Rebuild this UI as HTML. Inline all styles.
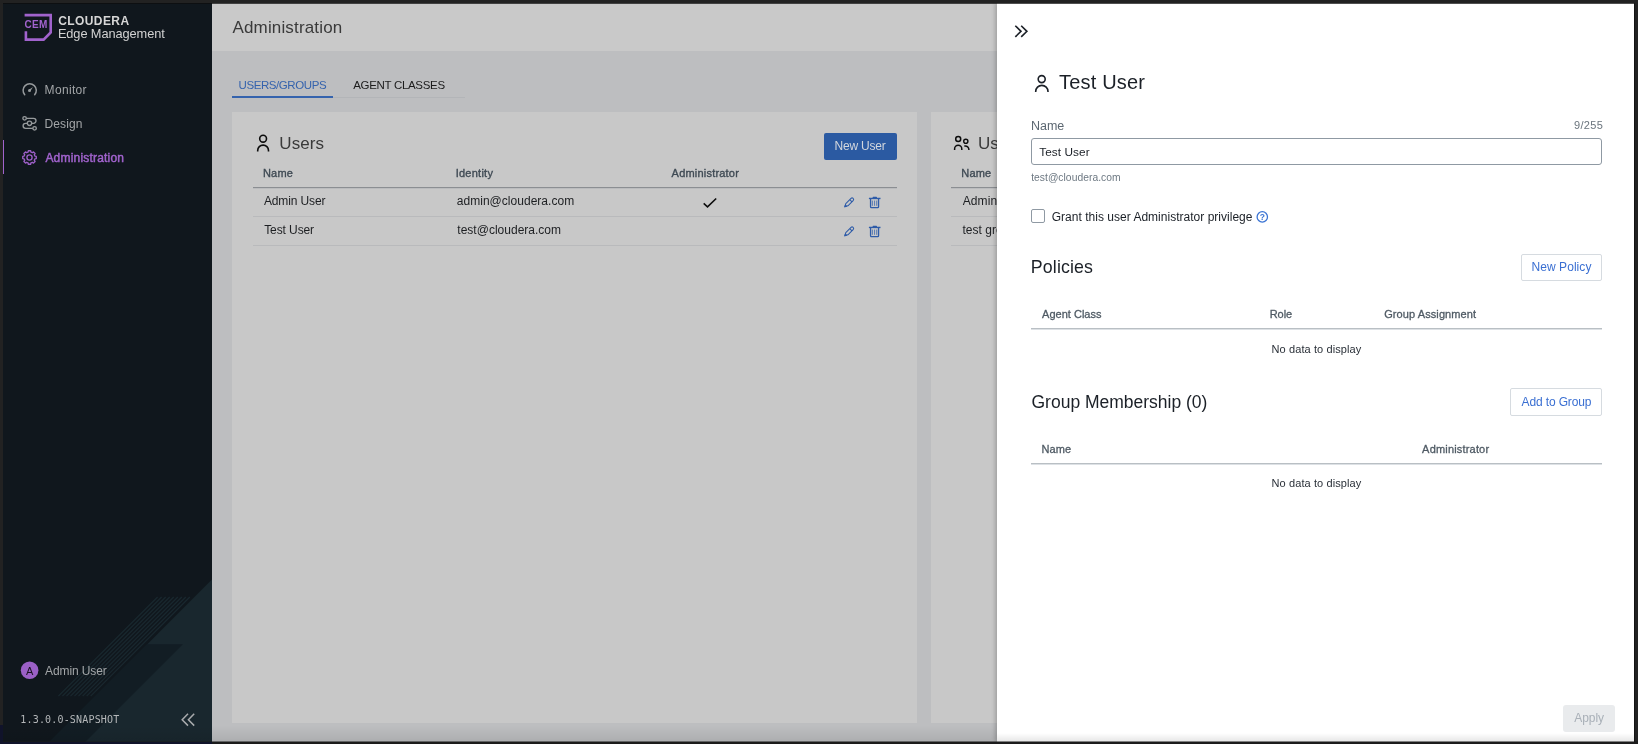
<!DOCTYPE html>
<html lang="en">
<head>
<meta charset="utf-8">
<title>Cloudera Edge Management - Administration</title>
<style>
html,body{margin:0;padding:0;}
body{width:1638px;height:744px;overflow:hidden;background:#222222;position:relative;font-family:"Liberation Sans",sans-serif;}
.abs{position:absolute;}
.t{position:absolute;white-space:nowrap;line-height:normal;}
#app{position:absolute;left:3px;top:3px;width:1631px;height:739px;overflow:hidden;background:#bdbec0;}
#root{position:absolute;left:-3px;top:-3px;width:1638px;height:744px;will-change:transform;}
#sidebar{position:absolute;left:3px;top:3px;width:209px;height:739px;background:#10171d;overflow:hidden;}
#header{position:absolute;left:212px;top:3px;width:786px;height:48px;background:#c9c9c9;}
.card{position:absolute;background:#c8c8c8;}
.hl{position:absolute;height:1px;}
#panel{position:absolute;left:997px;top:3px;width:637px;height:739px;background:#ffffff;box-shadow:-2px 0 4px rgba(0,0,0,0.20);}
.btn{position:absolute;box-sizing:border-box;border-radius:2px;}
</style>
</head>
<body>
<div id="app"><div id="root">

<!-- main content (dimmed by modal backdrop) -->
<div id="header"></div>
<div class="hl" style="left:232px;top:97px;width:233px;background:#b3b5b8;"></div>
<div class="abs" style="left:232px;top:96px;width:101px;height:2px;background:#3563ad;"></div>

<div class="card" id="card1" style="left:232px;top:112px;width:685px;height:611px;"></div>
<div class="card" id="card2" style="left:931px;top:112px;width:80px;height:611px;"></div>

<!-- users table lines -->
<div class="hl" style="left:253px;top:187px;width:644px;background:#8b8e92;"></div>
<div class="hl" style="left:253px;top:188px;width:644px;background:#bbbcbe;"></div>
<div class="hl" style="left:253px;top:216px;width:644px;background:#b9babc;"></div>
<div class="hl" style="left:253px;top:245px;width:644px;background:#b9babc;"></div>
<div class="hl" style="left:951px;top:187px;width:60px;background:#8b8e92;"></div>
<div class="hl" style="left:951px;top:188px;width:60px;background:#bbbcbe;"></div>
<div class="hl" style="left:951px;top:216px;width:60px;background:#b9babc;"></div>
<div class="hl" style="left:951px;top:245px;width:60px;background:#b9babc;"></div>

<div class="btn" style="left:824px;top:133px;width:73px;height:27px;background:#2b5aa2;"></div>

<svg class="abs" style="left:0;top:0;overflow:visible" width="997" height="744" viewBox="0 0 997 744" fill="none">
<g stroke="#0d0d0d" stroke-width="1.6">
<circle cx="263.1" cy="138.7" r="3.4"/>
<path d="M257.7,151.5 V150.5 a5.4,5.4 0 0 1 10.8,0 V151.5"/>
<circle cx="958.2" cy="139.1" r="2.5" stroke-width="1.5"/>
<path d="M954.6,150 V148.9 a3.6,3.6 0 0 1 7.2,0 V150" stroke-width="1.5"/>
<circle cx="965.8" cy="141.3" r="2.1" stroke-width="1.4"/>
<path d="M964.3,145.9 h0.9 a3.7,3.9 0 0 1 3.7,3.9 v0.2" stroke-width="1.5"/>
</g>
<path d="M703.7,203.4 L707.5,206.8 L716.2,198.5" stroke="#0d0d0d" stroke-width="1.6"/>
<g transform="translate(844.8,206.8) rotate(-45)" stroke="#2f5ca8" stroke-width="1.05" stroke-linejoin="round"><path d="M0,0 L2.9,-1.5 L10.3,-1.5 A1.5,1.5 0 0 1 10.3,1.5 L2.9,1.5 Z M8.6,-1.5 L8.6,1.5"/><path d="M0,0 L1.6,-0.8 L1.6,0.8 Z" fill="#2f5ca8"/></g>
<g stroke="#2f5ca8">
<path d="M868.9,198.45 H880.5" stroke-width="1.4"/>
<rect x="872.6" y="196.7" width="4.4" height="1.4" rx="0.6" fill="#2f5ca8" stroke="none"/>
<path d="M870.55,199.0 V206.8 a0.9,0.9 0 0 0 0.9,0.9 H877.65 a0.9,0.9 0 0 0 0.9,-0.9 V199.0" stroke-width="1.3"/>
<path d="M872.4,200.6 V205.8 M874.55,200.6 V205.8 M876.7,200.6 V205.8" stroke-width="0.8" stroke="#3d68ae"/>
</g>
<g transform="translate(844.8,235.8) rotate(-45)" stroke="#2f5ca8" stroke-width="1.05" stroke-linejoin="round"><path d="M0,0 L2.9,-1.5 L10.3,-1.5 A1.5,1.5 0 0 1 10.3,1.5 L2.9,1.5 Z M8.6,-1.5 L8.6,1.5"/><path d="M0,0 L1.6,-0.8 L1.6,0.8 Z" fill="#2f5ca8"/></g>
<g stroke="#2f5ca8">
<path d="M868.9,227.45 H880.5" stroke-width="1.4"/>
<rect x="872.6" y="225.7" width="4.4" height="1.4" rx="0.6" fill="#2f5ca8" stroke="none"/>
<path d="M870.55,228.0 V235.8 a0.9,0.9 0 0 0 0.9,0.9 H877.65 a0.9,0.9 0 0 0 0.9,-0.9 V228.0" stroke-width="1.3"/>
<path d="M872.4,229.6 V234.8 M874.55,229.6 V234.8 M876.7,229.6 V234.8" stroke-width="0.8" stroke="#3d68ae"/>
</g>
</svg>

<!-- sidebar -->
<div id="sidebar">
<svg class="abs" style="left:0;top:0" width="209" height="739" viewBox="3 3 209 739">
  <polygon points="212,579.6 212,742 49.6,742" fill="#19272e"/>
  <polygon points="146.8,644.3 182.9,644.3 85.2,742 49.1,742" fill="#121d24"/>
  <g stroke="#19282f" stroke-width="1.2" fill="none">
  <line x1="157.6" y1="597.0" x2="58.4" y2="696.2"/>
  <line x1="161.6" y1="597.0" x2="62.4" y2="696.2"/>
  <line x1="165.7" y1="597.0" x2="66.5" y2="696.2"/>
  <line x1="169.7" y1="597.0" x2="70.5" y2="696.2"/>
  <line x1="173.7" y1="597.0" x2="74.5" y2="696.2"/>
  <line x1="177.8" y1="597.0" x2="78.5" y2="696.2"/>
  <line x1="181.8" y1="597.0" x2="82.6" y2="696.2"/>
  <line x1="185.8" y1="597.0" x2="86.6" y2="696.2"/>
  <line x1="189.8" y1="597.0" x2="90.6" y2="696.2"/>
  </g>
</svg>
<div class="abs" style="left:0;top:137px;width:1px;height:34px;background:#a163cd;"></div>
</div>

<svg class="abs" style="left:0;top:0;overflow:visible" width="212" height="744" viewBox="0 0 212 744" fill="none">
<path d="M24.6,15.1 H50.7 V32.4 L43.6,39.6 H25.9 V31.3" stroke="#a163cd" stroke-width="2.6" stroke-linejoin="miter"/>
<path d="M24.72,94.73 A6.6,6.6 0 1 1 34.68,94.73" stroke="#969a9c" stroke-width="1.5" stroke-linecap="round"/>
<circle cx="29.5" cy="90.5" r="1.5" fill="#969a9c"/>
<path d="M28.9,89.7 L33.0,87.1 L30.3,91.2 Z" fill="#969a9c"/>
<g stroke="#969a9c" stroke-width="1.35">
<circle cx="24.6" cy="118.3" r="1.75"/>
<circle cx="29.5" cy="123.3" r="2.15"/>
<circle cx="34.6" cy="128.3" r="1.75"/>
<path d="M26.4,118.3 H33.5 A2.5,2.5 0 0 1 33.5,123.3 H31.7"/>
<path d="M27.3,123.3 H25.6 A2.5,2.5 0 0 0 25.6,128.3 H32.8"/>
</g>
<path d="M28.08,152.14 L28.38,150.74 L30.62,150.74 L30.92,152.14 L32.29,152.70 L33.48,151.93 L35.07,153.52 L34.30,154.71 L34.86,156.08 L36.26,156.38 L36.26,158.62 L34.86,158.92 L34.30,160.29 L35.07,161.48 L33.48,163.07 L32.29,162.30 L30.92,162.86 L30.62,164.26 L28.38,164.26 L28.08,162.86 L26.71,162.30 L25.52,163.07 L23.93,161.48 L24.70,160.29 L24.14,158.92 L22.74,158.62 L22.74,156.38 L24.14,156.08 L24.70,154.71 L23.93,153.52 L25.52,151.93 L26.71,152.70 Z" stroke="#9d60c8" stroke-width="1.35" stroke-linejoin="round"/>
<circle cx="29.5" cy="157.5" r="2.6" stroke="#9d60c8" stroke-width="1.35"/>
<circle cx="29.6" cy="670.2" r="8.8" fill="#9b60c6"/>
<path d="M188.0,713.8 L182.2,719.7 L188.0,725.6 M194.2,713.8 L188.4,719.7 L194.2,725.6" stroke="#a9abad" stroke-width="1.5"/>
</svg>

<div class="abs" style="left:0;top:0;width:997px;height:744px;overflow:hidden;">
<div class="t" id="t21" style='left:978.04px;top:134.00px;font:400 17px "Liberation Sans", sans-serif;letter-spacing:0.050px;color:#3a3a3a;'>User Groups</div>
<div class="t" id="t22" style='left:961.37px;top:167.10px;font:400 11px "Liberation Sans", sans-serif;letter-spacing:0.104px;color:#3f4a54;-webkit-text-stroke:0.35px #3f4a54;'>Name</div>
<div class="t" id="t23" style='left:962.76px;top:194.30px;font:400 12px "Liberation Sans", sans-serif;letter-spacing:0.080px;color:#1d1f22;'>Administrators</div>
<div class="t" id="t24" style='left:962.43px;top:223.00px;font:400 12px "Liberation Sans", sans-serif;letter-spacing:0.050px;color:#1d1f22;'>test group</div>
</div>

<!-- slide-in panel -->
<div id="panel"></div>
<div class="abs" style="left:1031px;top:138px;width:571px;height:27px;box-sizing:border-box;border:1px solid #8f99a3;border-radius:3px;background:#fff;"></div>
<div class="abs" style="left:1031px;top:209px;width:14px;height:14px;box-sizing:border-box;border:1px solid #8f99a3;border-radius:2px;background:#fff;"></div>
<div class="btn" style="left:1521px;top:254px;width:81px;height:27px;border:1px solid #d6dbe0;background:#fff;"></div>
<div class="btn" style="left:1510px;top:388px;width:92px;height:28px;border:1px solid #d6dbe0;background:#fff;"></div>
<div class="hl" style="left:1031px;top:328px;width:571px;background:#b9bfc4;"></div>
<div class="hl" style="left:1031px;top:329px;width:571px;background:#dde1e5;"></div>
<div class="hl" style="left:1031px;top:463px;width:571px;background:#b9bfc4;"></div>
<div class="hl" style="left:1031px;top:464px;width:571px;background:#dde1e5;"></div>
<div class="btn" style="left:1563px;top:705px;width:52px;height:27px;background:#e9ebed;border-radius:3px;"></div>

<svg class="abs" style="left:997px;top:0;overflow:visible" width="637" height="744" viewBox="997 0 637 744" fill="none">
<path d="M1015.3,25.8 L1021.0,31.35 L1015.3,36.9 M1021.2,25.8 L1026.9,31.35 L1021.2,36.9" stroke="#1b2027" stroke-width="1.6"/>
<g stroke="#1b2027" stroke-width="1.6"><circle cx="1041.7" cy="79.1" r="3.5"/><path d="M1035.7,91.9 V91.5 a6.15,6.15 0 0 1 12.3,0 V91.9"/></g>
<circle cx="1262.3" cy="216.9" r="5.2" stroke="#3b74d4" stroke-width="1.3"/>
</svg>

<div class="t" id="t0" style='left:24.60px;top:18.50px;font:700 10px "Liberation Sans", sans-serif;letter-spacing:0.275px;color:#a163cd;'>CEM</div>
<div class="t" id="t1" style='left:58.15px;top:13.60px;font:700 12px "Liberation Sans", sans-serif;letter-spacing:0.420px;color:#d6d6d6;'>CLOUDERA</div>
<div class="t" id="t2" style='left:57.89px;top:25.70px;font:400 12.8px "Liberation Sans", sans-serif;letter-spacing:-0.089px;color:#d2d2d2;'>Edge Management</div>
<div class="t" id="t3" style='left:44.58px;top:83.00px;font:400 12px "Liberation Sans", sans-serif;letter-spacing:0.327px;color:#a3a6a8;'>Monitor</div>
<div class="t" id="t4" style='left:44.58px;top:116.90px;font:400 12px "Liberation Sans", sans-serif;letter-spacing:0.079px;color:#a3a6a8;'>Design</div>
<div class="t" id="t5" style='left:45.40px;top:150.80px;font:400 12px "Liberation Sans", sans-serif;letter-spacing:0.195px;color:#a163cd;-webkit-text-stroke:0.45px #a163cd;'>Administration</div>
<div class="t" id="t6" style='left:45.08px;top:664.10px;font:400 12px "Liberation Sans", sans-serif;letter-spacing:-0.115px;color:#a3a6a8;'>Admin User</div>
<div class="t" id="t7" style='left:20.29px;top:714.40px;font:400 10px "DejaVu Sans Mono", "Liberation Mono", monospace;letter-spacing:0.178px;color:#b4b7b9;'>1.3.0.0-SNAPSHOT</div>
<div class="t" id="t8" style='left:25.95px;top:664.60px;font:400 11px "Liberation Sans", sans-serif;letter-spacing:0.000px;color:#1a1320;'>A</div>
<div class="t" id="t9" style='left:232.44px;top:18.20px;font:400 17px "Liberation Sans", sans-serif;letter-spacing:0.162px;color:#3a3a3a;'>Administration</div>
<div class="t" id="t10" style='left:238.62px;top:79.40px;font:400 11.5px "Liberation Sans", sans-serif;letter-spacing:-0.428px;color:#3563ad;'>USERS/GROUPS</div>
<div class="t" id="t11" style='left:353.21px;top:79.40px;font:400 11.5px "Liberation Sans", sans-serif;letter-spacing:-0.314px;color:#1c1c1c;'>AGENT CLASSES</div>
<div class="t" id="t12" style='left:279.32px;top:134.00px;font:400 17px "Liberation Sans", sans-serif;letter-spacing:0.091px;color:#3a3a3a;'>Users</div>
<div class="t" id="t13" style='left:262.91px;top:167.10px;font:400 11px "Liberation Sans", sans-serif;letter-spacing:0.241px;color:#3f4a54;-webkit-text-stroke:0.35px #3f4a54;'>Name</div>
<div class="t" id="t14" style='left:455.63px;top:167.10px;font:400 11px "Liberation Sans", sans-serif;letter-spacing:0.258px;color:#3f4a54;-webkit-text-stroke:0.35px #3f4a54;'>Identity</div>
<div class="t" id="t15" style='left:671.62px;top:167.10px;font:400 11px "Liberation Sans", sans-serif;letter-spacing:0.201px;color:#3f4a54;-webkit-text-stroke:0.35px #3f4a54;'>Administrator</div>
<div class="t" id="t16" style='left:263.88px;top:194.30px;font:400 12px "Liberation Sans", sans-serif;letter-spacing:-0.113px;color:#1d1f22;'>Admin User</div>
<div class="t" id="t17" style='left:456.81px;top:194.00px;font:400 12px "Liberation Sans", sans-serif;letter-spacing:0.026px;color:#1d1f22;'>admin@cloudera.com</div>
<div class="t" id="t18" style='left:264.22px;top:223.00px;font:400 12px "Liberation Sans", sans-serif;letter-spacing:-0.098px;color:#1d1f22;'>Test User</div>
<div class="t" id="t19" style='left:457.34px;top:222.90px;font:400 12px "Liberation Sans", sans-serif;letter-spacing:0.010px;color:#1d1f22;'>test@cloudera.com</div>
<div class="t" id="t20" style='left:834.42px;top:139.20px;font:400 12px "Liberation Sans", sans-serif;letter-spacing:-0.184px;color:#d3d7dd;'>New User</div>
<div class="t" id="t25" style='left:1059.00px;top:71.30px;font:400 20px "Liberation Sans", sans-serif;letter-spacing:0.182px;color:#1b2027;'>Test User</div>
<div class="t" id="t26" style='left:1030.90px;top:119.20px;font:400 12.5px "Liberation Sans", sans-serif;letter-spacing:0.011px;color:#5c6771;'>Name</div>
<div class="t" id="t27" style='left:1574.03px;top:119.30px;font:400 11px "Liberation Sans", sans-serif;letter-spacing:0.340px;color:#6a747d;'>9/255</div>
<div class="t" id="t28" style='left:1039.31px;top:144.70px;font:400 11.8px "Liberation Sans", sans-serif;letter-spacing:0.059px;color:#1b2027;'>Test User</div>
<div class="t" id="t29" style='left:1031.15px;top:172.40px;font:400 10.3px "Liberation Sans", sans-serif;letter-spacing:0.035px;color:#6d7882;'>test@cloudera.com</div>
<div class="t" id="t30" style='left:1051.75px;top:209.90px;font:400 12px "Liberation Sans", sans-serif;letter-spacing:0.017px;color:#1b2027;'>Grant this user Administrator privilege</div>
<div class="t" id="t31" style='left:1030.83px;top:257.40px;font:400 17.8px "Liberation Sans", sans-serif;letter-spacing:0.128px;color:#1b2027;'>Policies</div>
<div class="t" id="t32" style='left:1531.59px;top:260.40px;font:400 12px "Liberation Sans", sans-serif;letter-spacing:0.051px;color:#3a6fd2;'>New Policy</div>
<div class="t" id="t33" style='left:1042.11px;top:308.30px;font:400 11px "Liberation Sans", sans-serif;letter-spacing:0.004px;color:#4f5a64;-webkit-text-stroke:0.3px #4f5a64;'>Agent Class</div>
<div class="t" id="t34" style='left:1269.67px;top:308.30px;font:400 11px "Liberation Sans", sans-serif;letter-spacing:-0.038px;color:#4f5a64;-webkit-text-stroke:0.3px #4f5a64;'>Role</div>
<div class="t" id="t35" style='left:1384.16px;top:308.30px;font:400 11px "Liberation Sans", sans-serif;letter-spacing:0.092px;color:#4f5a64;-webkit-text-stroke:0.3px #4f5a64;'>Group Assignment</div>
<div class="t" id="t36" style='left:1271.50px;top:342.70px;font:400 11px "Liberation Sans", sans-serif;letter-spacing:0.105px;color:#2a3038;'>No data to display</div>
<div class="t" id="t37" style='left:1031.53px;top:392.00px;font:400 17.5px "Liberation Sans", sans-serif;letter-spacing:-0.007px;color:#1b2027;'>Group Membership (0)</div>
<div class="t" id="t38" style='left:1521.53px;top:394.70px;font:400 12px "Liberation Sans", sans-serif;letter-spacing:-0.130px;color:#3a6fd2;'>Add to Group</div>
<div class="t" id="t39" style='left:1041.38px;top:443.00px;font:400 11px "Liberation Sans", sans-serif;letter-spacing:0.159px;color:#4f5a64;-webkit-text-stroke:0.3px #4f5a64;'>Name</div>
<div class="t" id="t40" style='left:1422.11px;top:443.00px;font:400 11px "Liberation Sans", sans-serif;letter-spacing:0.181px;color:#4f5a64;-webkit-text-stroke:0.3px #4f5a64;'>Administrator</div>
<div class="t" id="t41" style='left:1271.50px;top:477.10px;font:400 11px "Liberation Sans", sans-serif;letter-spacing:0.105px;color:#2a3038;'>No data to display</div>
<div class="t" id="t42" style='left:1574.35px;top:710.90px;font:400 12px "Liberation Sans", sans-serif;letter-spacing:-0.098px;color:#a9b0b8;'>Apply</div>
<div class="t" id="t43" style='left:1259.63px;top:212.20px;font:700 8.5px "Liberation Sans", sans-serif;letter-spacing:0.000px;color:#3b74d4;'>?</div>

<!-- window-edge shading -->
<div class="abs" style="left:3px;top:726px;width:994px;height:16px;background:linear-gradient(to bottom,rgba(0,0,0,0),rgba(0,0,0,0.085));pointer-events:none;"></div>
<div class="abs" style="left:997px;top:733px;width:637px;height:9px;background:linear-gradient(to bottom,rgba(0,0,0,0),rgba(0,0,0,0.10));pointer-events:none;"></div>
</div></div>
<div class="abs" style="left:3px;top:3px;width:1632px;height:1px;background:rgba(12,12,12,0.72);"></div>
<div class="abs" style="left:1634px;top:3px;width:1px;height:739px;background:#141414;"></div>
<div class="abs" style="left:0;top:741px;width:1638px;height:1px;background:rgba(26,26,26,0.5);"></div>
<div class="abs" style="left:0;top:742px;width:1638px;height:2px;background:#1b1b1b;"></div>
<div class="abs" style="left:0;top:742px;width:212px;height:2px;background:#10132a;"></div>
<div class="abs" style="left:0;top:725px;width:3px;height:19px;background:#10132a;"></div>
</body>
</html>
